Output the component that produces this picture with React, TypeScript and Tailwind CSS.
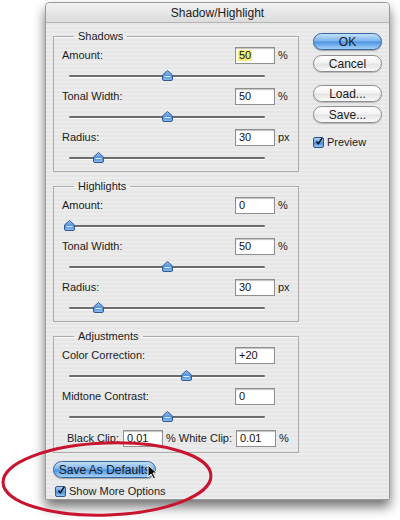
import React from "react";

type Ctl = { label: string; value: string; unit?: string; pos: number; selected?: boolean };

const shadows: Ctl[] = [
  { label: "Amount:", value: "50", unit: "%", pos: 0.5, selected: true },
  { label: "Tonal Width:", value: "50", unit: "%", pos: 0.5 },
  { label: "Radius:", value: "30", unit: "px", pos: 0.15 },
];

const highlights: Ctl[] = [
  { label: "Amount:", value: "0", unit: "%", pos: 0 },
  { label: "Tonal Width:", value: "50", unit: "%", pos: 0.5 },
  { label: "Radius:", value: "30", unit: "px", pos: 0.15 },
];

const adjustments: Ctl[] = [
  { label: "Color Correction:", value: "+20", pos: 0.6 },
  { label: "Midtone Contrast:", value: "0", pos: 0.5 },
];

function Field({ value, selected }: { value: string; selected?: boolean }) {
  return (
    <div className="w-[40px] h-[17px] bg-white border border-[#8f8f8f] shadow-[inset_0_1px_1px_rgba(0,0,0,0.25)] flex items-center pl-[2px] text-[11px] leading-none text-[#111]">
      <span className={selected ? "bg-[#f4ee7c] px-[1px]" : "px-[1px]"}>{value}</span>
    </div>
  );
}

function Thumb() {
  return (
    <svg width="11" height="11" viewBox="0 0 11 11">
      <defs>
        <linearGradient id="th" x1="0" y1="0" x2="0" y2="1">
          <stop offset="0" stopColor="#9cc6f2" />
          <stop offset="0.55" stopColor="#4f8fdc" />
          <stop offset="1" stopColor="#8fc0f0" />
        </linearGradient>
      </defs>
      <path d="M5.5 0.5 L10.5 5 L10.5 9 Q10.5 10.5 9 10.5 L2 10.5 Q0.5 10.5 0.5 9 L0.5 5 Z" fill="url(#th)" stroke="#33598f" strokeWidth="1" />
      <path d="M2.5 6.5 L8.5 6.5" stroke="#dcecff" strokeWidth="1" />
    </svg>
  );
}

function Slider({ pos }: { pos: number }) {
  return (
    <div className="relative ml-[7px] w-[196px] h-[24px]">
      <div className="absolute top-[11px] left-0 right-0 h-[2px] rounded-full bg-[#6c6c6c] shadow-[0_1px_0_#ffffff]" />
      <div className="absolute top-[6px]" style={{ left: pos * 196 - 5.5 }}>
        <Thumb />
      </div>
    </div>
  );
}

function Control({ c }: { c: Ctl }) {
  return (
    <div className="flex flex-col">
      <div className="flex items-center h-[17px]">
        <span className="w-[173px]">{c.label}</span>
        <Field value={c.value} selected={c.selected} />
        {c.unit && <span className="ml-[3px]">{c.unit}</span>}
      </div>
      <Slider pos={c.pos} />
    </div>
  );
}

function Group({ title, items, extra, className }: { title: string; items: Ctl[]; extra?: React.ReactNode; className: string }) {
  return (
    <fieldset className={"border border-[#acacac] px-[8px] shadow-[inset_0_1px_0_rgba(255,255,255,0.7)] " + className}>
      <legend className="ml-[12px] px-[4px] leading-[13px] text-[11px]">{title}</legend>
      <div className="pt-[4px]">
        {items.map((c) => (
          <Control key={c.label} c={c} />
        ))}
        {extra}
      </div>
    </fieldset>
  );
}

function Check({ label }: { label: string }) {
  return (
    <div className="flex items-center gap-[3px]">
      <div className="w-[11px] h-[11px] rounded-[2px] border border-[#2f5687] bg-[linear-gradient(180deg,#a8d0f6_0%,#5b9be3_50%,#3f86dc_51%,#94c6f4_100%)] flex items-center justify-center">
        <svg width="11" height="11" viewBox="0 0 11 11" className="-mt-[2px] ml-[1px]">
          <path d="M2 5.5 L4.5 8.5 L10 0.5" fill="none" stroke="#111" strokeWidth="2" />
        </svg>
      </div>
      <span>{label}</span>
    </div>
  );
}

function AquaButton({ label, blue, className }: { label: string; blue?: boolean; className?: string }) {
  return (
    <div
      className={
        "h-[17px] rounded-full border flex items-center justify-center text-[12px] leading-none " +
        (blue
          ? "border-[#3a649c] bg-[linear-gradient(180deg,#c4e0fa_0%,#79b3ee_48%,#4b92e2_52%,#a4d2f8_100%)] shadow-[0_1px_1px_rgba(0,0,0,0.3)] "
          : "border-[#8c8c8c] bg-[linear-gradient(180deg,#ffffff_0%,#f3f3f3_48%,#e2e2e2_52%,#fafafa_100%)] shadow-[0_1px_1px_rgba(0,0,0,0.2)] ") +
        (className ?? "")
      }
    >
      {label}
    </div>
  );
}

export default function App() {
  return (
    <div className="relative w-[400px] h-[520px] bg-white overflow-hidden font-['Liberation_Sans',Arial,sans-serif] text-[11px] text-[#1b1b1b]">
      <div className="ml-[45px] mt-[2px] w-[345px] h-[498px] flex flex-col border border-[#9a9a9a] rounded-t-[4px] bg-[repeating-linear-gradient(0deg,#ececec_0px,#ececec_2px,#e6e6e6_2px,#e6e6e6_4px)] shadow-[0_7px_12px_rgba(0,0,0,0.55)]">
        <div className="h-[20px] shrink-0 rounded-t-[4px] border-b border-[#b4b4b4] bg-[linear-gradient(180deg,#f2f2f2_0%,#dcdcdc_100%)] flex items-center justify-center text-[12px] text-[#222]">
          Shadow/Highlight
        </div>
        <div className="flex pl-[7px]">
          <div className="w-[246px] flex flex-col">
            <Group title="Shadows" items={shadows} className="mt-[7px] pb-[1px]" />
            <Group title="Highlights" items={highlights} className="mt-[8px] pb-[1px]" />
            <Group
              title="Adjustments"
              items={adjustments}
              className="mt-[8px] pb-[5px]"
              extra={
                <div className="flex items-center h-[17px] mt-[1px] pl-[5px]">
                  <span className="w-[56px]">Black Clip:</span>
                  <Field value="0.01" />
                  <span className="ml-[3px] w-[70px]">% White Clip:</span>
                  <Field value="0.01" />
                  <span className="ml-[3px]">%</span>
                </div>
              }
            />
            <AquaButton label="Save As Defaults" blue className="mt-[8px] w-[103px] h-[16px]" />
            <div className="mt-[5px] ml-[2px]">
              <Check label="Show More Options" />
            </div>
          </div>
          <div className="ml-[14px] w-[69px] flex flex-col">
            <AquaButton label="OK" blue className="mt-[10px]" />
            <AquaButton label="Cancel" className="mt-[5px]" />
            <AquaButton label="Load..." className="mt-[13px]" />
            <AquaButton label="Save..." className="mt-[4px]" />
            <div className="mt-[11px]">
              <Check label="Preview" />
            </div>
          </div>
        </div>
      </div>

      <svg className="absolute left-0 top-0 pointer-events-none" width="400" height="520">
        <ellipse cx="107" cy="479" rx="104" ry="36" fill="none" stroke="#c8142f" strokeWidth="3" transform="rotate(-2 107 479)" />
        <path d="M148 465 L148 477 L151 474 L153.5 479 L155.5 478 L153 473 L157 473 Z" fill="#111" stroke="#fff" strokeWidth="1" />
      </svg>
    </div>
  );
}
